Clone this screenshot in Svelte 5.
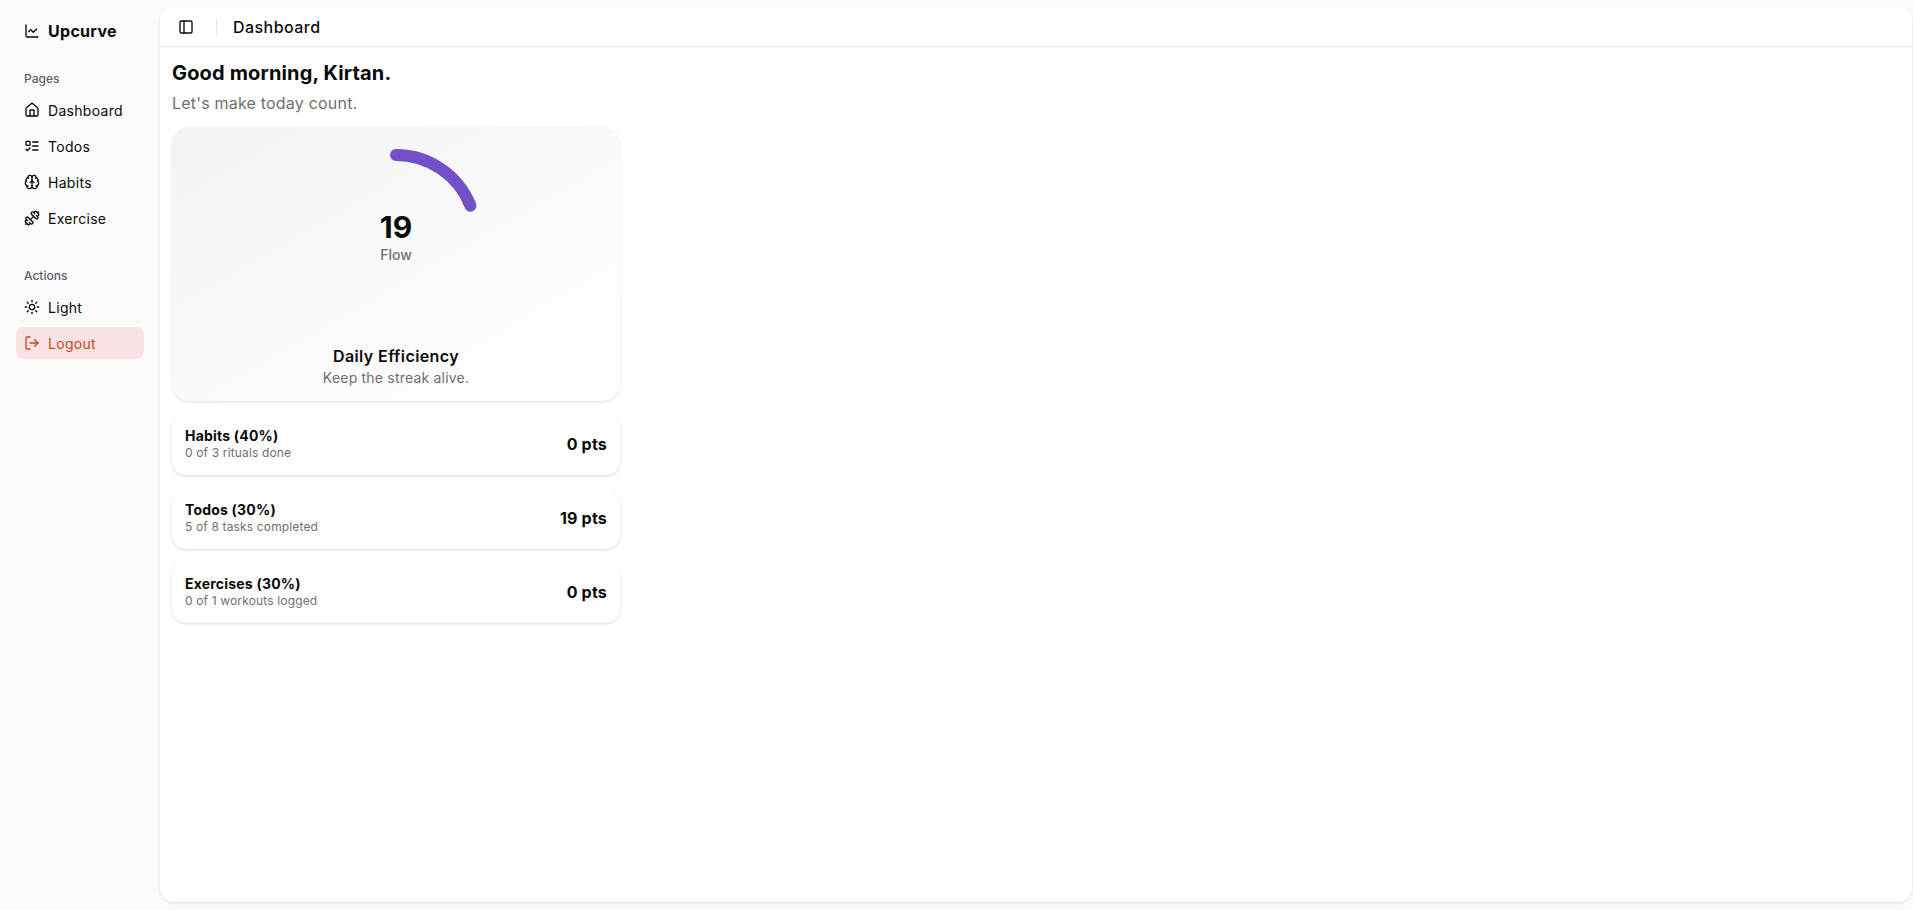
<script lang="ts">
  // Dashboard shell: sidebar nav, top bar, flow gauge and score breakdown.

  const icons: Record<string, string[]> = {
    dashboard: [
      'M15 21v-8a1 1 0 0 0-1-1h-4a1 1 0 0 0-1 1v8',
      'M3 10a2 2 0 0 1 .709-1.528l7-5.999a2 2 0 0 1 2.582 0l7 5.999A2 2 0 0 1 21 10v9a2 2 0 0 1-2 2H5a2 2 0 0 1-2-2z'
    ],
    todos: [
      'M4 5h4a1 1 0 0 1 1 1v4a1 1 0 0 1-1 1H4a1 1 0 0 1-1-1V6a1 1 0 0 1 1-1z',
      'm3 17 2 2 4-4',
      'M13 6h8',
      'M13 12h8',
      'M13 18h8'
    ],
    habits: [
      'M12 18V5',
      'M15 13a4.17 4.17 0 0 1-3-4 4.17 4.17 0 0 1-3 4',
      'M17.598 6.5A3 3 0 1 0 12 5a3 3 0 1 0-5.598 1.5',
      'M17.997 5.125a4 4 0 0 1 2.526 5.77',
      'M18 18a4 4 0 0 0 2-7.464',
      'M19.967 17.483A4 4 0 1 1 12 18a4 4 0 1 1-7.967-.517',
      'M6 18a4 4 0 0 1-2-7.464',
      'M6.003 5.125a4 4 0 0 0-2.526 5.77'
    ],
    exercise: [
      'M17.596 12.768a2 2 0 1 0 2.829-2.829l-1.768-1.767a2 2 0 0 0 2.828-2.829l-2.828-2.828a2 2 0 0 0-2.829 2.828l-1.767-1.768a2 2 0 1 0-2.829 2.829z',
      'm2.5 21.5 1.4-1.4',
      'm20.1 3.9 1.4-1.4',
      'M5.343 21.485a2 2 0 1 0 2.829-2.828l1.767 1.768a2 2 0 1 0 2.829-2.829l-6.364-6.364a2 2 0 1 0-2.829 2.829l1.768 1.767a2 2 0 0 0-2.828 2.829z',
      'm9.6 14.4 4.8-4.8'
    ],
    light: [
      'M12 8a4 4 0 1 0 0 8 4 4 0 0 0 0-8z',
      'M12 2v2',
      'M12 20v2',
      'm4.93 4.93 1.41 1.41',
      'm17.66 17.66 1.41 1.41',
      'M2 12h2',
      'M20 12h2',
      'm6.34 17.66-1.41 1.41',
      'm19.07 4.93-1.41 1.41'
    ],
    logout: ['m16 17 5-5-5-5', 'M21 12H9', 'M9 21H5a2 2 0 0 1-2-2V5a2 2 0 0 1 2-2h4'],
    logo: ['M3 3v16a2 2 0 0 0 2 2h16', 'm19 9-5 5-4-4-3 3'],
    panel: ['M5 3h14a2 2 0 0 1 2 2v14a2 2 0 0 1-2 2H5a2 2 0 0 1-2-2V5a2 2 0 0 1 2-2z', 'M9 3v18']
  };

  const pages = [
    { id: 'dashboard', label: 'Dashboard' },
    { id: 'todos', label: 'Todos' },
    { id: 'habits', label: 'Habits' },
    { id: 'exercise', label: 'Exercise' }
  ];

  const scores = [
    { title: 'Habits (40%)', detail: '0 of 3 rituals done', pts: 0 },
    { title: 'Todos (30%)', detail: '5 of 8 tasks completed', pts: 19 },
    { title: 'Exercises (30%)', detail: '0 of 1 workouts logged', pts: 0 }
  ];

  const flow = 19;
  const radius = 80;
  const circumference = 2 * Math.PI * radius;
  const dash = `${(flow / 100) * circumference} ${circumference}`;
</script>

{#snippet icon(name: string)}
  <svg class="icon" viewBox="0 0 24 24" aria-hidden="true">
    {#each icons[name] as d}
      <path {d} />
    {/each}
  </svg>
{/snippet}

<div class="shell">
  <aside class="sidebar">
    <div class="brand">
      {@render icon('logo')}
      <span>Upcurve</span>
    </div>

    <div class="group-label pages">Pages</div>
    <nav class="menu">
      {#each pages as page}
        <a class="item" href="#{page.id}">
          {@render icon(page.id)}
          <span>{page.label}</span>
        </a>
      {/each}
    </nav>

    <div class="group-label actions">Actions</div>
    <div class="menu">
      <button class="item">
        {@render icon('light')}
        <span>Light</span>
      </button>
      <button class="item danger">
        {@render icon('logout')}
        <span>Logout</span>
      </button>
    </div>
  </aside>

  <main class="inset">
    <header class="topbar">
      <button class="toggle" aria-label="Toggle sidebar">{@render icon('panel')}</button>
      <span class="divider"></span>
      <span class="crumb">Dashboard</span>
    </header>

    <div class="content">
      <h1>Good morning, Kirtan.</h1>
      <p class="lead">Let's make today count.</p>

      <section class="gauge-card">
        <div class="gauge">
          <svg viewBox="0 0 176 176" width="176" height="176" aria-hidden="true">
            <circle
              cx="88"
              cy="88"
              r={radius}
              fill="none"
              stroke="#7350c8"
              stroke-width="12"
              stroke-linecap="round"
              stroke-dasharray={dash}
              transform="rotate(-90 88 88)"
            />
          </svg>
          <div class="gauge-label">
            <strong>{flow}</strong>
            <span>Flow</span>
          </div>
        </div>
        <h2>Daily Efficiency</h2>
        <p>Keep the streak alive.</p>
      </section>

      {#each scores as score}
        <section class="score">
          <div>
            <h3>{score.title}</h3>
            <p>{score.detail}</p>
          </div>
          <span class="pts">{score.pts} pts</span>
        </section>
      {/each}
    </div>
  </main>
</div>

<style>
  :global(body) {
    margin: 0;
    background: #fafafa;
    font-family: Inter, 'Noto Sans', sans-serif;
    color: #0a0a0a;
  }

  .shell {
    display: flex;
    height: 910px;
    overflow: hidden;
  }

  .sidebar {
    width: 160px;
    flex: 0 0 160px;
    box-sizing: border-box;
    padding: 0 16px;
  }

  .brand {
    display: flex;
    align-items: center;
    gap: 8px;
    height: 20px;
    margin: 21px 0 0 8px;
    font-size: 16px;
    font-weight: 700;
    letter-spacing: 0.3px;
  }

  .group-label {
    padding-left: 8px;
    height: 16px;
    line-height: 16px;
    font-size: 12px;
    font-weight: 500;
    color: #5c6270;
  }

  .pages {
    margin-top: 30px;
  }

  .actions {
    margin-top: 34px;
  }

  .menu {
    display: flex;
    flex-direction: column;
    gap: 4px;
    margin-top: 7px;
  }

  .item {
    display: flex;
    align-items: center;
    gap: 8px;
    height: 32px;
    padding: 0 8px;
    border: 0;
    border-radius: 8px;
    background: none;
    color: inherit;
    font: inherit;
    font-size: 14px;
    letter-spacing: 0.3px;
    text-decoration: none;
    text-align: left;
  }

  .danger {
    background: #f9e2e3;
    color: #c9491a;
  }

  .icon {
    width: 16px;
    height: 16px;
    flex: 0 0 auto;
    fill: none;
    stroke: currentColor;
    stroke-width: 2;
    stroke-linecap: round;
    stroke-linejoin: round;
  }

  .inset {
    flex: 1;
    margin: 7px 1px 8px 0;
    border-radius: 14px;
    background: #fff;
    box-shadow: 0 1px 3px rgba(0, 0, 0, 0.12);
    min-width: 0;
  }

  .topbar {
    display: flex;
    align-items: center;
    height: 39px;
    padding: 0 18px;
    border-bottom: 1px solid #e5e5e5;
  }

  .toggle {
    display: flex;
    padding: 0;
    border: 0;
    background: none;
    color: inherit;
  }

  .divider {
    width: 1px;
    height: 16px;
    margin: 0 16px 0 22px;
    background: #e5e5e5;
  }

  .crumb {
    font-size: 16px;
    font-weight: 500;
    letter-spacing: 0.45px;
  }

  .content {
    width: 448px;
    margin-left: 12px;
  }

  h1 {
    margin: 0;
    padding-top: 12px;
    font-size: 20px;
    line-height: 28px;
    font-weight: 700;
    letter-spacing: 0.15px;
  }

  .lead {
    margin: 4px 0 12px;
    font-size: 16px;
    line-height: 24px;
    color: #6f6f6f;
    letter-spacing: 0.2px;
  }

  .gauge-card {
    box-sizing: border-box;
    height: 274px;
    padding-top: 20px;
    margin-bottom: 12px;
    border-radius: 18px;
    text-align: center;
    background: linear-gradient(150deg, #f3f3f3, #fdfdfd 80%);
    box-shadow: 0 1px 3px rgba(0, 0, 0, 0.14);
  }

  .gauge {
    position: relative;
    width: 176px;
    height: 176px;
    margin: 0 auto;
  }

  .gauge svg {
    display: block;
  }

  .gauge-label {
    position: absolute;
    left: 0;
    right: 0;
    top: 62px;
    display: flex;
    flex-direction: column;
    align-items: center;
  }

  .gauge-label strong {
    font-size: 30px;
    line-height: 36px;
    font-weight: 700;
  }

  .gauge-label span {
    font-size: 14px;
    line-height: 20px;
    font-weight: 500;
    color: #6f6f6f;
  }

  h2 {
    margin: 21px 0 0;
    font-size: 16px;
    line-height: 24px;
    font-weight: 600;
    letter-spacing: 0.4px;
  }

  .gauge-card p {
    margin: 0;
    font-size: 14px;
    line-height: 20px;
    color: #6f6f6f;
    letter-spacing: 0.2px;
  }

  .score {
    box-sizing: border-box;
    display: flex;
    align-items: center;
    justify-content: space-between;
    height: 62px;
    padding: 0 13px;
    margin-bottom: 12px;
    border-radius: 14px;
    background: #fff;
    box-shadow: 0 1px 3px rgba(0, 0, 0, 0.16);
  }

  h3 {
    margin: 0;
    font-size: 14px;
    line-height: 18px;
    font-weight: 700;
    letter-spacing: 0.2px;
  }

  .score p {
    margin: 0;
    font-size: 12px;
    line-height: 16px;
    color: #6f6f6f;
    letter-spacing: 0.15px;
  }

  .pts {
    font-size: 16px;
    font-weight: 700;
    letter-spacing: 0.2px;
  }
</style>
